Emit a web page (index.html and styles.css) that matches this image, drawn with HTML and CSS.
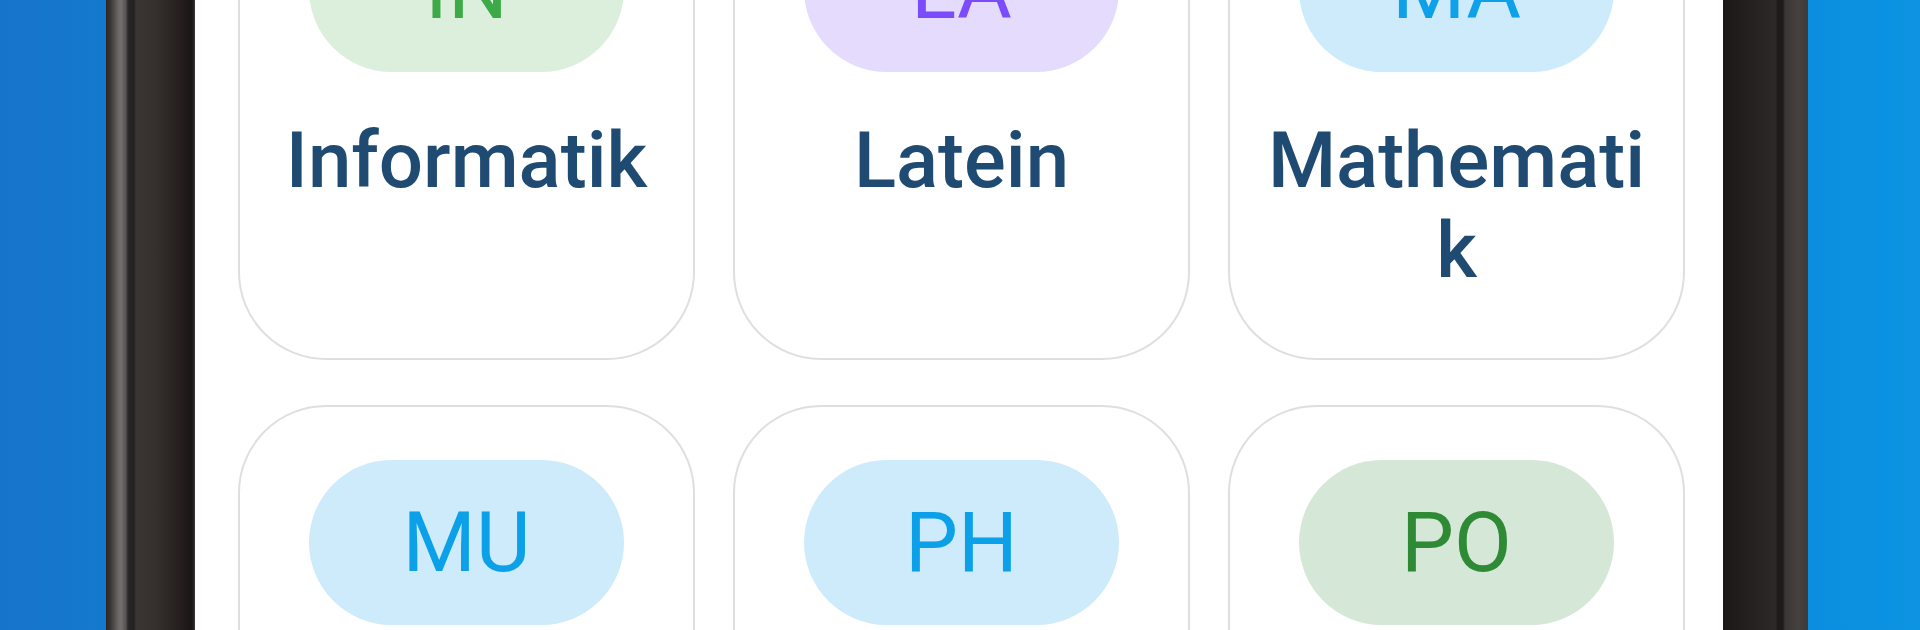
FILE: index.html
```html
<!DOCTYPE html>
<html lang="de">
<head>
<meta charset="utf-8">
<title>Fächer</title>
<link rel="stylesheet" href="styles.css">
</head>
<body>
<div class="stage">
  <div class="bg-left"></div>
  <div class="frame-left"></div>
  <main class="screen">
    <div class="grid">
      <div class="card">
        <div class="pill pill-in">IN</div>
        <div class="title">Informatik</div>
      </div>
      <div class="card">
        <div class="pill pill-la">LA</div>
        <div class="title">Latein</div>
      </div>
      <div class="card">
        <div class="pill pill-ma">MA</div>
        <div class="title">Mathematik</div>
      </div>
      <div class="card">
        <div class="pill pill-mu">MU</div>
        <div class="title">Musik</div>
      </div>
      <div class="card">
        <div class="pill pill-ph">PH</div>
        <div class="title">Physik</div>
      </div>
      <div class="card">
        <div class="pill pill-po">PO</div>
        <div class="title">Politik</div>
      </div>
    </div>
  </main>
  <div class="frame-right"></div>
  <div class="bg-right"></div>
</div>
</body>
</html>
```

FILE: styles.css
```css
html, body {
  margin: 0;
  padding: 0;
  width: 1920px;
  height: 630px;
  overflow: hidden;
}

body {
  font-family: Roboto, "Noto Sans", "Liberation Sans", sans-serif;
}

.stage {
  display: flex;
  width: 1920px;
  height: 630px;
  background: linear-gradient(90deg, #1573c9 0%, #0f84d6 50%, #0a91e2 100%);
}

.bg-left {
  width: 106px;
  flex: none;
  background: linear-gradient(90deg, #1774cb, #1479cd);
}

.bg-right {
  width: 112px;
  flex: none;
  background: linear-gradient(90deg, #0b8edf, #0c93e2);
}

.frame-left {
  width: 89px;
  flex: none;
  background: linear-gradient(90deg,
    #2a2625 0px,
    #3d3937 5px,
    #6a6664 12px,
    #74706e 15px,
    #555150 20px,
    #2a2726 22px,
    #242120 28px,
    #3b3634 30px,
    #35302e 50px,
    #241f1d 75px,
    #191514 86px,
    #3a3635 89px);
}

.frame-right {
  width: 85px;
  flex: none;
  background: linear-gradient(90deg,
    #1a1716 0px,
    #221e1d 20px,
    #2d2927 52px,
    #1c1918 55px,
    #1e1b1a 60px,
    #3a3634 62px,
    #46413f 75px,
    #3e3a38 85px);
}

.screen {
  width: 1528px;
  flex: none;
  background: #ffffff;
  overflow: hidden;
}

.grid {
  display: grid;
  grid-template-columns: repeat(3, 457px);
  column-gap: 38px;
  row-gap: 45px;
  padding-left: 43px;
  margin-top: -148px;
}

.card {
  border: 2px solid #dfdfdf;
  border-radius: 88px;
  padding: 53px 34px 62px;
  display: flex;
  flex-direction: column;
  align-items: center;
  background: #fff;
}

.pill {
  width: 315px;
  height: 165px;
  border-radius: 83px;
  display: flex;
  align-items: center;
  justify-content: center;
  font-size: 84px;
  font-weight: 400;
  line-height: 1;
  flex: none;
}

.pill-in { background: #dcefdd; color: #3daa47; }
.pill-la { background: #e5dcfd; color: #7b4cfb; }
.pill-ma { background: #cdebfb; color: #0fa0ea; }
.pill-mu { background: #cdebfb; color: #0ba0e8; }
.pill-ph { background: #cdebfb; color: #0ba0e8; }
.pill-po { background: #d5e7d6; color: #2e8a35; }

.title {
  margin-top: 44px;
  width: 100%;
  font-size: 78px;
  line-height: 90px;
  font-weight: 500;
  color: #1f4a72;
  text-align: center;
  overflow-wrap: anywhere;
}
```
